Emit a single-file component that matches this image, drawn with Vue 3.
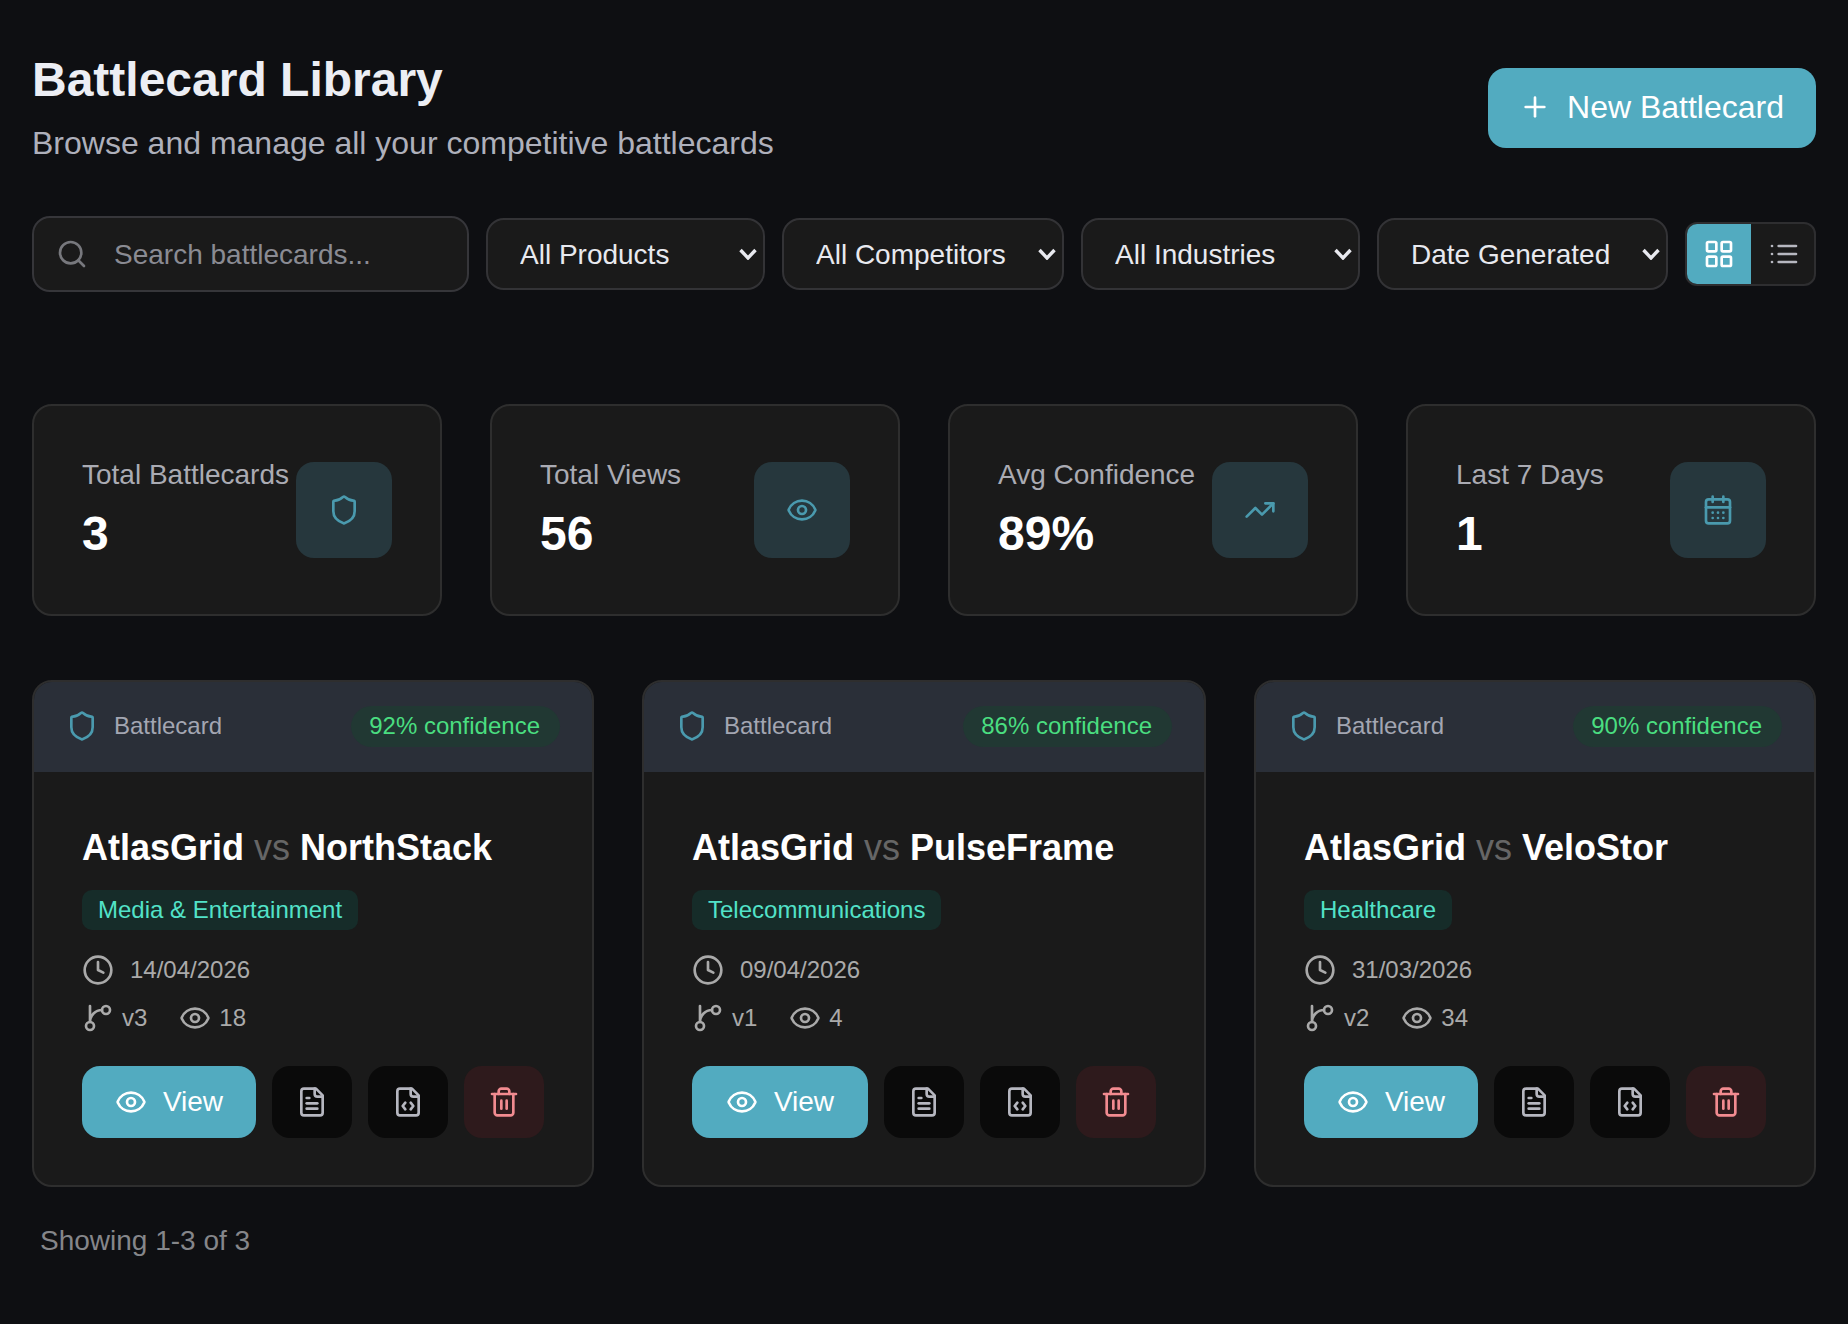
<template>
  <div class="page">
    <!-- Header -->
    <header class="page-header">
      <div>
        <h1 class="page-title">Battlecard Library</h1>
        <p class="page-subtitle">Browse and manage all your competitive battlecards</p>
      </div>
      <button class="new-btn">
        <svg class="icon" viewBox="0 0 24 24"><path d="M5 12h14" /><path d="M12 5v14" /></svg>
        New Battlecard
      </button>
    </header>

    <!-- Filters -->
    <div class="filters">
      <div class="search-box">
        <svg class="icon search-icon" viewBox="0 0 24 24"><circle cx="11" cy="11" r="8" /><path d="m21 21-4.3-4.3" /></svg>
        <input class="search-input" type="text" placeholder="Search battlecards..." />
      </div>
      <div v-for="filter in filters" :key="filter.label" class="select-wrap" :style="{ width: filter.width + 'px' }">
        <select class="select">
          <option>{{ filter.label }}</option>
        </select>
        <svg class="chevron" viewBox="0 0 18 12"><path d="M1.5 2 9 10l7.5-8" /></svg>
      </div>
      <div class="view-toggle">
        <button class="toggle-btn active">
          <svg class="icon" viewBox="0 0 24 24">
            <rect x="3" y="3" width="7" height="7" rx="1" /><rect x="14" y="3" width="7" height="7" rx="1" />
            <rect x="14" y="14" width="7" height="7" rx="1" /><rect x="3" y="14" width="7" height="7" rx="1" />
          </svg>
        </button>
        <button class="toggle-btn list-btn">
          <svg class="icon" viewBox="0 0 24 24">
            <path d="M3 6h.01" /><path d="M3 12h.01" /><path d="M3 18h.01" />
            <path d="M8 6h13" /><path d="M8 12h13" /><path d="M8 18h13" />
          </svg>
        </button>
      </div>
    </div>

    <!-- Stats -->
    <div class="stats">
      <div v-for="stat in stats" :key="stat.label" class="stat-card">
        <div>
          <div class="stat-label">{{ stat.label }}</div>
          <div class="stat-value">{{ stat.value }}</div>
        </div>
        <div class="stat-icon">
          <svg class="icon" viewBox="0 0 24 24">
            <path v-for="d in icons[stat.icon]" :key="d" :d="d" />
          </svg>
        </div>
      </div>
    </div>

    <!-- Cards -->
    <div class="cards">
      <div v-for="card in cards" :key="card.competitor" class="card">
        <div class="card-head">
          <div class="card-kind">
            <svg class="icon kind-icon" viewBox="0 0 24 24"><path :d="icons.shield[0]" /></svg>
            Battlecard
          </div>
          <span class="confidence">{{ card.confidence }}% confidence</span>
        </div>
        <div class="card-body">
          <h3 class="card-title">AtlasGrid <span class="vs">vs</span> {{ card.competitor }}</h3>
          <span class="tag">{{ card.industry }}</span>
          <div class="meta date-row">
            <svg class="icon" viewBox="0 0 24 24"><path v-for="d in icons.clock" :key="d" :d="d" /></svg>
            {{ card.date }}
          </div>
          <div class="meta version-row">
            <span class="meta-item">
              <svg class="icon" viewBox="0 0 24 24"><path v-for="d in icons.branch" :key="d" :d="d" /></svg>
              {{ card.version }}
            </span>
            <span class="meta-item">
              <svg class="icon" viewBox="0 0 24 24"><path v-for="d in icons.eye" :key="d" :d="d" /></svg>
              {{ card.views }}
            </span>
          </div>
          <div class="actions">
            <button class="view-btn">
              <svg class="icon" viewBox="0 0 24 24"><path v-for="d in icons.eye" :key="d" :d="d" /></svg>
              View
            </button>
            <button class="icon-btn">
              <svg class="icon" viewBox="0 0 24 24"><path v-for="d in icons.fileText" :key="d" :d="d" /></svg>
            </button>
            <button class="icon-btn">
              <svg class="icon" viewBox="0 0 24 24"><path v-for="d in icons.fileCode" :key="d" :d="d" /></svg>
            </button>
            <button class="icon-btn danger">
              <svg class="icon" viewBox="0 0 24 24"><path v-for="d in icons.trash" :key="d" :d="d" /></svg>
            </button>
          </div>
        </div>
      </div>
    </div>

    <div class="showing">Showing 1-3 of 3</div>
  </div>
</template>

<script setup>
const filePath = 'M15 2H6a2 2 0 0 0-2 2v16a2 2 0 0 0 2 2h12a2 2 0 0 0 2-2V7Z'
const fileFold = 'M14 2v4a2 2 0 0 0 2 2h4'
const circle3 = 'M15 12a3 3 0 1 1-6 0 3 3 0 0 1 6 0'

const icons = {
  shield: ['M20 13c0 5-3.5 7.5-7.66 8.95a1 1 0 0 1-.67-.01C7.5 20.5 4 18 4 13V6a1 1 0 0 1 1-1c2 0 4.5-1.2 6.24-2.72a1.17 1.17 0 0 1 1.52 0C14.51 3.81 17 5 19 5a1 1 0 0 1 1 1z'],
  eye: ['M2.062 12.348a1 1 0 0 1 0-.696 10.75 10.75 0 0 1 19.876 0 1 1 0 0 1 0 .696 10.75 10.75 0 0 1-19.876 0', circle3],
  trend: ['M22 7 13.5 15.5 8.5 10.5 2 17', 'M16 7h6v6'],
  calendar: ['M8 2v4', 'M16 2v4', 'M5 4h14a2 2 0 0 1 2 2v14a2 2 0 0 1-2 2H5a2 2 0 0 1-2-2V6a2 2 0 0 1 2-2z', 'M3 10h18', 'M8 14h.01', 'M12 14h.01', 'M16 14h.01', 'M8 18h.01', 'M12 18h.01', 'M16 18h.01'],
  clock: ['M22 12a10 10 0 1 1-20 0 10 10 0 0 1 20 0', 'M12 6v6l4 2'],
  branch: ['M15 6a9 9 0 0 0-9 9V3', 'M21 6a3 3 0 1 1-6 0 3 3 0 0 1 6 0', 'M9 18a3 3 0 1 1-6 0 3 3 0 0 1 6 0'],
  fileText: [filePath, fileFold, 'M10 9H8', 'M16 13H8', 'M16 17H8'],
  fileCode: [filePath, fileFold, 'M10 12.5 8 15l2 2.5', 'm14 12.5 2 2.5-2 2.5'],
  trash: ['M3 6h18', 'M19 6v14c0 1-1 2-2 2H7c-1 0-2-1-2-2V6', 'M8 6V4c0-1 1-2 2-2h4c1 0 2 1 2 2v2', 'M10 11v6', 'M14 11v6']
}

const filters = [
  { label: 'All Products', width: 279 },
  { label: 'All Competitors', width: 282 },
  { label: 'All Industries', width: 279 },
  { label: 'Date Generated', width: 291 }
]

const stats = [
  { label: 'Total Battlecards', value: '3', icon: 'shield' },
  { label: 'Total Views', value: '56', icon: 'eye' },
  { label: 'Avg Confidence', value: '89%', icon: 'trend' },
  { label: 'Last 7 Days', value: '1', icon: 'calendar' }
]

const cards = [
  { competitor: 'NorthStack', industry: 'Media & Entertainment', confidence: 92, date: '14/04/2026', version: 'v3', views: 18 },
  { competitor: 'PulseFrame', industry: 'Telecommunications', confidence: 86, date: '09/04/2026', version: 'v1', views: 4 },
  { competitor: 'VeloStor', industry: 'Healthcare', confidence: 90, date: '31/03/2026', version: 'v2', views: 34 }
]
</script>

<style>
body {
  background: #0e0f12;
}
</style>

<style scoped>
.page {
  min-height: 1324px;
  box-sizing: border-box;
  padding: 44px 32px 0;
  background: #0e0f12;
  font-family: "Liberation Sans", Arial, sans-serif;
  color: #fff;
}

button,
input,
select {
  font-family: inherit;
}

.icon {
  width: 32px;
  height: 32px;
  flex-shrink: 0;
  fill: none;
  stroke: currentColor;
  stroke-width: 2;
  stroke-linecap: round;
  stroke-linejoin: round;
}

/* Header */
.page-header {
  display: flex;
  align-items: flex-start;
  justify-content: space-between;
}

.page-title {
  margin: 0;
  font-size: 48px;
  line-height: 72px;
  font-weight: 700;
  color: #eceef4;
}

.page-subtitle {
  margin: 5px 0 0;
  font-size: 32px;
  line-height: 44px;
  color: #aeb0bb;
}

.new-btn {
  display: flex;
  align-items: center;
  gap: 16px;
  height: 80px;
  margin-top: 24px;
  padding: 0 32px 2px 31px;
  background: #52abc0;
  border: none;
  border-radius: 18px;
  font-size: 32px;
  color: #fff;
}

/* Filters */
.filters {
  display: flex;
  align-items: center;
  gap: 17px;
  margin-top: 51px;
}

.search-box {
  position: relative;
  flex: 1;
  min-width: 0;
}

.search-icon {
  position: absolute;
  left: 24px;
  top: 22px;
  color: #77787d;
}

.search-input {
  display: block;
  width: 100%;
  height: 76px;
  box-sizing: border-box;
  padding: 2px 16px 0 80px;
  background: #1a1a1a;
  border: 2px solid #36363a;
  border-radius: 18px;
  font-size: 28px;
  color: #fff;
  outline: none;
}

.search-input::placeholder {
  color: #8a8b93;
  opacity: 1;
}

.select-wrap {
  position: relative;
  flex: none;
}

.select {
  display: block;
  width: 100%;
  height: 72px;
  box-sizing: border-box;
  padding: 0 32px;
  appearance: none;
  background: #1a1a1a;
  border: 2px solid #333336;
  border-radius: 18px;
  font-size: 28px;
  color: #e8e9ef;
  outline: none;
}

.chevron {
  position: absolute;
  right: 8px;
  top: 30px;
  width: 18px;
  height: 12px;
  fill: none;
  stroke: #e8e9ef;
  stroke-width: 3.4;
  pointer-events: none;
}

.view-toggle {
  display: grid;
  grid-template-columns: repeat(2, 1fr);
  flex: none;
  width: 131px;
  height: 64px;
  box-sizing: border-box;
  background: #1a1a1a;
  border: 2px solid #2e2e30;
  border-radius: 12px;
  overflow: hidden;
}

.toggle-btn {
  display: flex;
  align-items: center;
  justify-content: center;
  padding: 0;
  background: transparent;
  border: none;
  color: #b6b7c0;
}

.toggle-btn.active {
  background: #52abc0;
  color: #fff;
}

.list-btn {
  padding-left: 4px;
}

/* Stats */
.stats {
  display: grid;
  grid-template-columns: repeat(4, 1fr);
  gap: 48px;
  margin-top: 112px;
}

.stat-card {
  display: flex;
  align-items: center;
  justify-content: space-between;
  padding: 52px 48px;
  background: #1a1a1a;
  border: 2px solid #2e2e2e;
  border-radius: 20px;
}

.stat-label {
  font-size: 28px;
  line-height: 34px;
  color: #aaabb3;
  white-space: nowrap;
}

.stat-value {
  margin-top: 14px;
  font-size: 48px;
  line-height: 56px;
  font-weight: 700;
}

.stat-icon {
  display: flex;
  align-items: center;
  justify-content: center;
  width: 96px;
  height: 96px;
  flex-shrink: 0;
  background: #26373d;
  border-radius: 18px;
  color: #4a9aae;
}

/* Cards */
.cards {
  display: grid;
  grid-template-columns: 562px 564px 562px;
  gap: 48px;
  margin-top: 64px;
}

.card {
  background: #1a1a1a;
  border: 2px solid #2e2e2e;
  border-radius: 20px;
  overflow: hidden;
}

.card-head {
  display: flex;
  align-items: center;
  justify-content: space-between;
  height: 90px;
  box-sizing: border-box;
  padding: 0 32px 2px;
  background: #2a2f38;
}

.card-kind {
  display: flex;
  align-items: center;
  gap: 16px;
  font-size: 24px;
  color: #a3a6b2;
}

.kind-icon {
  color: #4a9aae;
}

.confidence {
  display: flex;
  align-items: center;
  height: 41px;
  padding: 0 20px 0 18px;
  background: #213833;
  border-radius: 21px;
  font-size: 24px;
  color: #4ade80;
}

.card-body {
  padding: 54px 48px 47px;
}

.card-title {
  margin: 0;
  font-size: 36px;
  line-height: 44px;
  font-weight: 700;
}

.vs {
  font-weight: 400;
  color: #666;
}

.tag {
  display: inline-flex;
  align-items: center;
  height: 40px;
  margin-top: 20px;
  padding: 0 16px;
  background: #162c29;
  border-radius: 10px;
  font-size: 24px;
  color: #52e2c8;
}

.meta {
  display: flex;
  align-items: center;
  font-size: 24px;
  color: #aaa;
}

.date-row {
  gap: 16px;
  margin-top: 24px;
}

.version-row {
  gap: 32px;
  margin-top: 16px;
}

.meta-item {
  display: flex;
  align-items: center;
  gap: 8px;
}

.actions {
  display: flex;
  gap: 16px;
  margin-top: 32px;
}

.view-btn {
  flex: 1;
  display: flex;
  align-items: center;
  justify-content: center;
  gap: 16px;
  height: 72px;
  padding: 0;
  background: #52abc0;
  border: none;
  border-radius: 18px;
  font-size: 28px;
  color: #fff;
}

.icon-btn {
  display: flex;
  align-items: center;
  justify-content: center;
  width: 80px;
  height: 72px;
  padding: 0;
  background: #0a0a0a;
  border: none;
  border-radius: 18px;
  color: #b6b7c0;
}

.icon-btn.danger {
  background: #2e1a1c;
  color: #f28b90;
}

.showing {
  margin-top: 37px;
  padding-left: 8px;
  font-size: 28px;
  line-height: 34px;
  color: #85868a;
}
</style>
